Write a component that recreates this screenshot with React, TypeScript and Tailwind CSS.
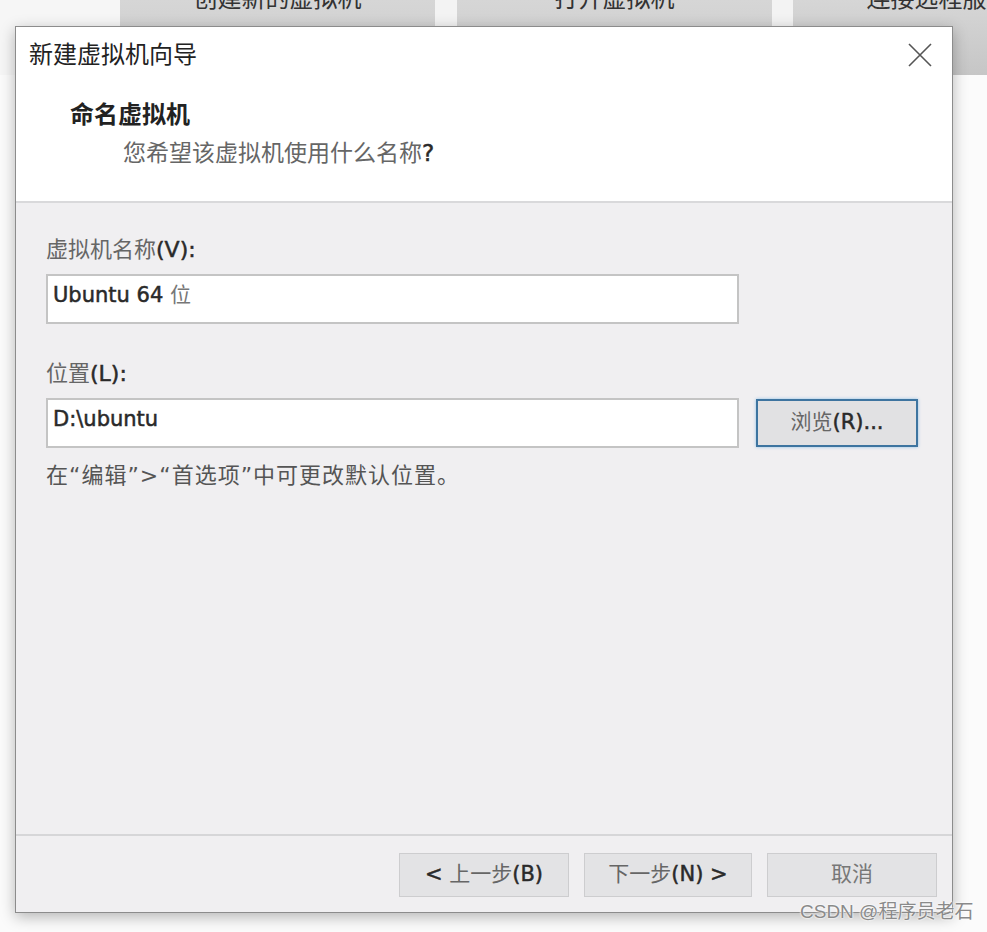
import React from "react";

const font = "font-['DejaVu_Sans','Noto_Sans_CJK_SC',sans-serif]";

function CloseIcon() {
  return (
    <svg width="24" height="24" viewBox="0 0 24 24" fill="none">
      <path d="M1 1 L23 23 M23 1 L1 23" stroke="#555" strokeWidth="1.6" />
    </svg>
  );
}

// latin bits in the old dialog font render darker than the CJK glyphs
function Lat({ children }: { children: React.ReactNode }) {
  return <span className="text-[#2a2a2a] [-webkit-text-stroke:0.5px_#2a2a2a]">{children}</span>;
}

function TextBox({ children }: { children: React.ReactNode }) {
  return (
    <div className="w-[693px] h-[50px] bg-white border-2 border-[#c4c4c4] px-[5px] pt-[4px] leading-[30px] text-[21px] text-[#1a1a1a]">
      {children}
    </div>
  );
}

function FooterButton({ children, muted }: { children: React.ReactNode; muted?: boolean }) {
  return (
    <button
      className={`w-full h-[44px] bg-[#e3e3e5] border border-[#cdcdcf] text-[21px] flex items-center justify-center ${
        muted ? "text-[#777]" : "text-[#666]"
      }`}
    >
      {children}
    </button>
  );
}

export default function App() {
  return (
    <div className={`relative w-[987px] h-[932px] overflow-hidden bg-[#fbfbfb] ${font}`}>
      {/* app tabs behind the wizard */}
      <div className="flex h-[75px] bg-white">
        <div className="w-[120px] shrink-0 bg-[#f6f6f6]" />
        <div className="w-[315px] shrink-0 bg-gradient-to-b from-[#d6d6d6] to-[#cbcbcb] text-center text-[24px] leading-[24px] text-[#333]">
          <div className="-mt-[13px]">创建新的虚拟机</div>
        </div>
        <div className="w-[22px] shrink-0 bg-[#f3f3f3]" />
        <div className="w-[315px] shrink-0 bg-gradient-to-b from-[#d6d6d6] to-[#cbcbcb] text-center text-[24px] leading-[24px] text-[#333]">
          <div className="-mt-[13px]">打开虚拟机</div>
        </div>
        <div className="w-[21px] shrink-0 bg-[#f3f3f3]" />
        <div className="w-[315px] shrink-0 bg-gradient-to-b from-[#d6d6d6] to-[#c6c6c6] text-center text-[24px] leading-[24px] text-[#333]">
          <div className="-mt-[13px]">连接远程服务器</div>
        </div>
      </div>

      {/* wizard dialog */}
      <div className="relative -mt-[49px] ml-[15px] w-[938px] h-[887px] flex flex-col border border-[#8c8c8c] bg-[#f0eff1] shadow-[0_4px_14px_rgba(0,0,0,0.28)]">
        <div className="h-[176px] bg-white border-b-2 border-[#d9d9db] flex flex-col">
          <div className="h-[56px] flex items-center justify-between pl-[13px] pr-[20px]">
            <span className="text-[24px] text-[#222]">新建虚拟机向导</span>
            <CloseIcon />
          </div>
          <div className="mt-[17px] pl-[54px] text-[24px] leading-[30px] font-bold text-[#222]">命名虚拟机</div>
          <div className="mt-[8px] pl-[107px] text-[23px] leading-[30px] text-[#666]">
            您希望该虚拟机使用什么名称<Lat>?</Lat>
          </div>
        </div>

        <div className="flex-1 pl-[30px] pt-[32px] flex flex-col">
          <div className="text-[22px] leading-[30px] text-[#666]">
            虚拟机名称<Lat>(V):</Lat>
          </div>
          <div className="mt-[9px]">
            <TextBox>
              <Lat>Ubuntu 64</Lat> <span className="text-[#777]">位</span>
            </TextBox>
          </div>
          <div className="mt-[35px] text-[22px] leading-[30px] text-[#666]">
            位置<Lat>(L):</Lat>
          </div>
          <div className="mt-[9px] flex items-start gap-[17px]">
            <TextBox>
              <Lat>D:\ubuntu</Lat>
            </TextBox>
            <button className="mt-[1px] w-[162px] h-[48px] bg-[#e1e1e3] border-2 border-[#3d74a0] shadow-[0_0_3px_rgba(120,180,230,0.8)] text-[21px] text-[#666] flex items-center justify-center">
              浏览<Lat>(R)...</Lat>
            </button>
          </div>
          <div className="mt-[13px] text-[22px] leading-[30px] text-[#555] tracking-[1px]">在“编辑”&gt;“首选项”中可更改默认位置。</div>
        </div>

        <div className="h-[78px] border-t-2 border-[#d6d6d8] flex justify-end items-start pt-[17px] pr-[15px] gap-[15px]">
          <div className="w-[170px]">
            <FooterButton>
              <Lat>&lt;</Lat>&nbsp;上一步<Lat>(B)</Lat>
            </FooterButton>
          </div>
          <div className="w-[168px]">
            <FooterButton>
              下一步<Lat>(N) &gt;</Lat>
            </FooterButton>
          </div>
          <div className="w-[170px]">
            <FooterButton muted>取消</FooterButton>
          </div>
        </div>
      </div>

      {/* watermark */}
      <div className="absolute left-[800px] top-[899px] text-[19px] leading-[26px] text-[#8a8a8a] font-['Liberation_Sans','Noto_Sans_CJK_SC',sans-serif] [text-shadow:0_0_2px_#fff,0_0_2px_#fff]">
        CSDN @程序员老石
      </div>
    </div>
  );
}
